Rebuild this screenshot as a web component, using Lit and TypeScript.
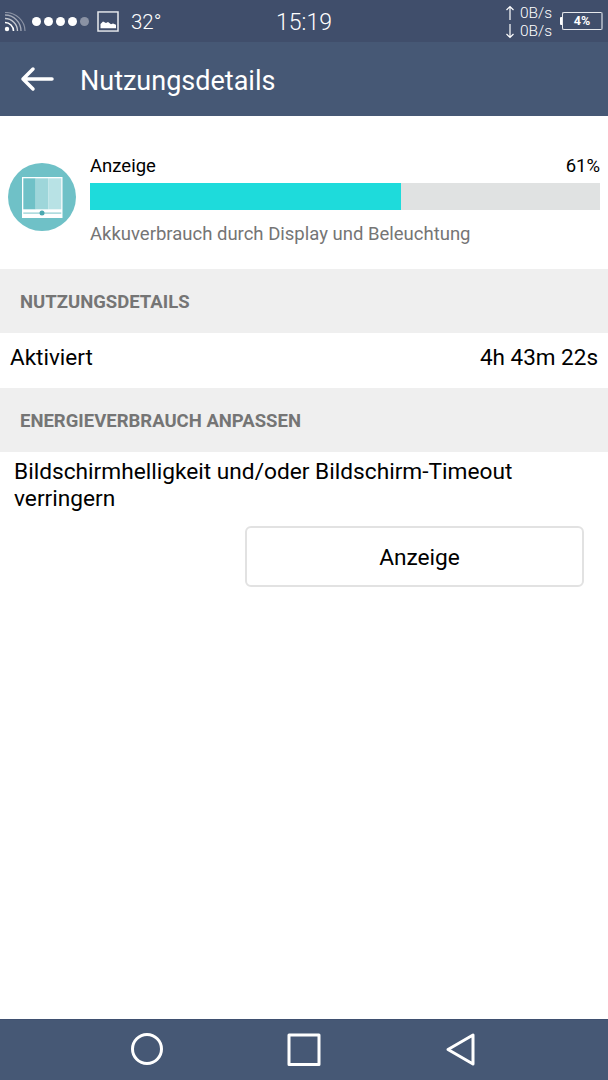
import { LitElement, html, css } from "lit";
import { customElement } from "lit/decorators.js";

@customElement("app-root")
export class AppRoot extends LitElement {
  static styles = css`
    :host { display: block; width: 608px; height: 1080px; font-family: Roboto, "Liberation Sans", sans-serif; background: #fff; color: #000; }
    .page { display: flex; flex-direction: column; height: 1080px; overflow: hidden; }
    .status { height: 42px; flex: none; background: #404e6b; color: #fff; display: flex; align-items: center; padding: 0 5px 0 4px; box-sizing: border-box; position: relative; }
    .wifi { width: 22px; height: 20px; margin-top: 2px; flex: none; }
    .dots { display: flex; gap: 3px; margin-left: 6px; }
    .dot { width: 9px; height: 9px; border-radius: 50%; background: #fff; }
    .dot.off { background: #8a92a4; }
    .pic { width: 22px; height: 21px; margin-left: 8px; flex: none; }
    .temp { font-size: 20.500px; margin-left: 12px; font-weight: 300; padding-top: 1px; }
    .time { position: absolute; left: 0; right: 0; top: 10px; text-align: center; font-size: 23px; font-weight: 300; line-height: 26px; }
    .spacer { flex: 1; }
    .net { display: grid; grid-template-columns: 11px auto; column-gap: 4px; font-size: 15.500px; line-height: 18px; font-weight: 300; margin-right: 8px; padding-top: 2px; align-items: center; }
    .net svg { width: 10px; height: 16px; }
    .batt { display: flex; align-items: center; }
    .nub { width: 2px; height: 8px; background: #fff; border-radius: 1px 0 0 1px; }
    .cell { width: 38px; height: 16px; border: 1px solid #e6e8ec; border-right: 2px solid #9aa3b4; border-radius: 2px; font-size: 12.500px; font-weight: 700; line-height: 16px; text-align: center; box-sizing: content-box; }
    .appbar { height: 74px; flex: none; background: #465875; color: #fff; display: flex; align-items: center; padding-left: 20px; }
    .back { width: 34px; height: 26px; flex: none; }
    .title { font-size: 27px; margin-left: 26px; padding-top: 3px; }
    .usage { height: 153px; flex: none; display: flex; align-items: flex-start; box-sizing: border-box; padding: 39px 8px 0 8px; }
    .app-icon { width: 68px; height: 68px; margin-top: 8px; flex: none; }
    .usage-body { flex: 1; margin-left: 14px; min-width: 0; }
    .usage-top { display: flex; justify-content: space-between; font-size: 18.500px; line-height: 22px; }
    .bar { height: 27px; background: #e0e2e2; margin-top: 6px; }
    .fill { height: 100%; background: #1edbdb; }
    .desc { color: #757575; font-size: 18.500px; line-height: 22px; margin-top: 13px; }
    .section { height: 64px; flex: none; background: #efefef; color: #757575; font-weight: 700; font-size: 18.500px; display: flex; align-items: center; padding: 2px 0 0 20px; box-sizing: border-box; }
    .row { height: 55px; flex: none; display: flex; justify-content: space-between; align-items: center; padding: 0 10px 8px; font-size: 22.500px; box-sizing: border-box; }
    .text { font-size: 22.700px; line-height: 27px; padding: 6px 14px 0; flex: none; }
    .btn-row { display: flex; justify-content: flex-end; padding: 14px 24px 0 0; flex: none; }
    .btn { width: 339px; height: 61px; box-sizing: border-box; border: 2px solid #e2e2e2; border-radius: 6px; background: #fff; font: inherit; font-size: 22.700px; color: #000; padding: 2px 0 0 10px; }
    .fillspace { flex: 1; }
    .nav { height: 61px; flex: none; background: #465875; border-top: 1px solid #3f5070; box-sizing: border-box; }
    .nav svg { width: 608px; height: 60px; display: block; }
  `;

  render() {
    return html`<div class="page">
      <div class="status">
        <svg class="wifi" viewBox="0 0 22 20" fill="none">
          <circle cx="3" cy="17" r="2.200" fill="#fff"/>
          <path d="M1 10.500a8.500 8.500 0 0 1 8.500 8.500" stroke="#fff" stroke-width="1.600"/>
          <path d="M1 6.500a12.500 12.500 0 0 1 12.500 12.500" stroke="#c4c8d0" stroke-width="1.400"/>
          <path d="M1 3a16 16 0 0 1 16 16" stroke="#a4aab8" stroke-width="1.300"/>
          <path d="M1 .5a20 18.500 0 0 1 20 18.500" stroke="#8a92a4" stroke-width="1.200"/>
        </svg>
        <div class="dots">
          <span class="dot"></span><span class="dot"></span><span class="dot"></span><span class="dot"></span><span class="dot off"></span>
        </div>
        <svg class="pic" viewBox="0 0 22 22" preserveAspectRatio="none">
          <rect x="1" y="1" width="20" height="20" fill="none" stroke="#e8eaee" stroke-width="1.500"/>
          <path d="M3.500 18V13.500l2.500-2.500 3 1.500 2-1 3 2.500 2-1 3 1.500V18z" fill="#fff"/>
        </svg>
        <span class="temp">32°</span>
        <div class="time">15:19</div>
        <div class="spacer"></div>
        <div class="net">
          <svg viewBox="0 0 10 16" fill="none" stroke="#fff" stroke-width="1.200"><path d="M5 15V1.500M1.500 5L5 1.500 8.500 5"/></svg><span>0B/s</span>
          <svg viewBox="0 0 10 16" fill="none" stroke="#fff" stroke-width="1.200"><path d="M5 1v13.500M1.500 11L5 14.500 8.500 11"/></svg><span>0B/s</span>
        </div>
        <div class="batt"><span class="nub"></span><div class="cell">4%</div></div>
      </div>
      <div class="appbar">
        <svg class="back" viewBox="0 0 34 26" fill="none" stroke="#fff" stroke-width="3.500" stroke-linecap="round" stroke-linejoin="round">
          <path d="M32 13H3M13 3L3 13l10 10"/>
        </svg>
        <div class="title">Nutzungsdetails</div>
      </div>
      <div class="usage">
        <svg class="app-icon" viewBox="0 0 68 68">
          <circle cx="34" cy="34" r="34" fill="#6fc1c7"/>
          <rect x="14" y="14" width="40.500" height="41" fill="#fff"/>
          <rect x="15.300" y="15.300" width="12.400" height="31" fill="#6fc1c7"/>
          <rect x="27.700" y="15.300" width="12.600" height="31" fill="#9ed6da"/>
          <rect x="40.300" y="15.300" width="13" height="31" fill="#b8e2e5"/>
          <rect x="15.300" y="49.500" width="38" height="1.200" fill="#8fcdd2"/>
          <circle cx="34" cy="50" r="2.500" fill="#4aa8b0"/>
        </svg>
        <div class="usage-body">
          <div class="usage-top"><span>Anzeige</span><span>61%</span></div>
          <div class="bar"><div class="fill" style="width:61%"></div></div>
          <div class="desc">Akkuverbrauch durch Display und Beleuchtung</div>
        </div>
      </div>
      <div class="section">NUTZUNGSDETAILS</div>
      <div class="row"><span>Aktiviert</span><span>4h 43m 22s</span></div>
      <div class="section">ENERGIEVERBRAUCH ANPASSEN</div>
      <div class="text">Bildschirmhelligkeit und/oder Bildschirm-Timeout verringern</div>
      <div class="btn-row"><button class="btn">Anzeige</button></div>
      <div class="fillspace"></div>
      <div class="nav">
        <svg viewBox="0 0 608 60" fill="none" stroke="#fff" stroke-width="3" stroke-linejoin="round">
          <circle cx="147" cy="29" r="14.500"/>
          <rect x="289" y="15" width="30" height="29.500"/>
          <path d="M473 15v29L448 29.500z"/>
        </svg>
      </div>
    </div>`;
  }
}
